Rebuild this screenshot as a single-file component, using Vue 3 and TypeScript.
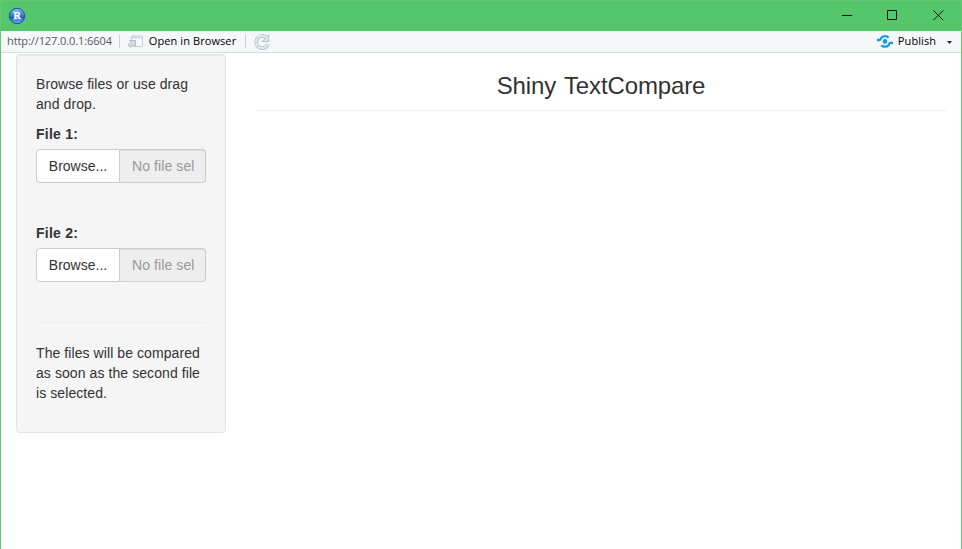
<script setup lang="ts">
interface FileField {
  id: string
  label: string
  status: string
}

const address = 'http://127.0.0.1:6604'
const fields: FileField[] = [
  { id: 'file1', label: 'File 1:', status: 'No file sel' },
  { id: 'file2', label: 'File 2:', status: 'No file sel' },
]
</script>

<template>
  <div class="window">
    <header class="titlebar">
      <svg class="logo" width="18" height="18" viewBox="0 0 18 18">
        <defs>
          <linearGradient id="ball" x1="0" y1="0" x2="0" y2="1">
            <stop offset="0" stop-color="#8fbdf0" />
            <stop offset="0.45" stop-color="#3f7fd4" />
            <stop offset="0.6" stop-color="#1f5fc4" />
            <stop offset="1" stop-color="#62b4f6" />
          </linearGradient>
        </defs>
        <circle cx="9" cy="9" r="7.7" fill="url(#ball)" stroke="#1c4fae" stroke-width="1" />
        <text x="9" y="12" text-anchor="middle" class="logo-letter">R</text>
      </svg>
      <div class="controls">
        <svg width="11" height="11" viewBox="0 0 11 11"><path d="M1 5.5H11" /></svg>
        <svg width="11" height="11" viewBox="0 0 11 11"><path d="M.5 .5H9.5V9.5H.5Z" /></svg>
        <svg width="11" height="11" viewBox="0 0 11 11"><path d="M.4 .4L10.2 10.2M10.2 .4L.4 10.2" /></svg>
      </div>
    </header>

    <nav class="toolbar">
      <span class="address">{{ address }}</span>
      <i class="divider first"></i>
      <button class="tool open">
        <svg width="17" height="13" viewBox="0 0 17 13">
          <rect x="4.5" y="1" width="11" height="10.5" rx="1" fill="#f8fbfe" stroke="#bdcbdb" />
          <path d="M5 1.5H15V3.5H5Z" fill="#c6dcf2" />
          <path d="M2.6 5.5H8.5V11.3L6.7 9.5L3.6 12.3L1 9.8L4.2 7.2Z" fill="#d5dde5" stroke="#a9b5c1" stroke-width=".9" />
        </svg>
        <span>Open in Browser</span>
      </button>
      <i class="divider second"></i>
      <svg class="refresh" width="16" height="16" viewBox="0 0 16 16">
        <path d="M12.3 3.4A6.1 6.1 0 1 0 14 10.2" fill="none" stroke="#b3c0ce" stroke-width="3.6" />
        <path d="M14.7 .8V7.5H8.2Z" fill="#dfe8f1" stroke="#b3c0ce" />
        <path d="M12.4 3.5A6.1 6.1 0 1 0 13.8 10.3" fill="none" stroke="#e4ebf2" stroke-width="2" />
      </svg>
      <button class="tool publish">
        <svg width="16" height="14" viewBox="0 0 16 14">
          <g fill="none" stroke="#159be3" stroke-width="2.3">
            <path d="M0 6H2.5C3.7 6 3.7 4.6 4.5 3.6C6.3 1.6 9.7 1.6 11.6 3.6" />
            <path d="M16 8.8H13.5C12.3 8.8 12.3 10.2 11.5 11.2C9.7 13.2 6.3 13.2 4.4 11.2" />
          </g>
          <circle cx="8" cy="7.4" r="2.3" fill="#159be3" />
        </svg>
        <span>Publish</span>
        <svg class="caret" width="5" height="3" viewBox="0 0 5 3"><path d="M0 0H5L2.5 3Z" fill="#222" /></svg>
      </button>
    </nav>

    <main class="page">
      <aside class="well">
        <p>Browse files or use drag and drop.</p>
        <div v-for="field in fields" :key="field.id" class="field">
          <label :for="field.id">{{ field.label }}</label>
          <div class="input-group">
            <button class="browse">Browse...</button>
            <div :id="field.id" class="filename">{{ field.status }}</div>
          </div>
        </div>
        <hr />
        <p>The files will be compared as soon as the second file is selected.</p>
      </aside>
      <section class="content">
        <h3>Shiny TextCompare</h3>
        <hr />
      </section>
    </main>
  </div>
</template>

<style>
body {
  margin: 0;
  overflow: hidden;
}
</style>

<style scoped>
* {
  box-sizing: border-box;
}
.window {
  width: 100%;
  height: 100vh;
  border: 1px solid #63c979;
  border-bottom: 0;
  background: #fff;
  color: #333;
  font: 14px/20px "Liberation Sans", Arial, sans-serif;
  overflow: hidden;
}
.titlebar {
  height: 30px;
  padding: 0 17px 0 7px;
  display: flex;
  align-items: center;
  justify-content: space-between;
  background: #55c76b;
}
.logo-letter {
  font: bold 10px "Liberation Serif", serif;
  fill: #fff;
  stroke: #fff;
  stroke-width: 0.4;
}
.controls {
  display: flex;
  gap: 35px;
  padding-bottom: 1px;
}
.controls svg {
  fill: none;
  stroke: #111;
  stroke-width: 1;
}
.toolbar {
  height: 22px;
  display: flex;
  align-items: center;
  padding-left: 6px;
  background: #f4f8f9;
  border-bottom: 1px solid #d6dadc;
  font: 11px/20px "Open Sans", "Noto Sans", sans-serif;
  color: #000;
}
.address {
  width: 105px;
  padding-bottom: 1px;
  letter-spacing: -0.09px;
  color: #55595c;
  white-space: nowrap;
}
.divider {
  width: 1px;
  height: 13px;
  margin-bottom: 1px;
  background: #cbd0d3;
}
.divider.first {
  margin-left: 7px;
}
.divider.second {
  margin-left: 8px;
}
.tool {
  display: flex;
  align-items: center;
  padding: 0 0 1px;
  border: 0;
  background: none;
  font: inherit;
  color: #000;
  white-space: nowrap;
}
.open {
  margin-left: 7px;
}
.open span {
  width: 89px;
  margin-left: 4px;
  letter-spacing: 0.09px;
}
.refresh {
  margin-left: 8px;
}
.publish {
  margin-left: auto;
  padding-right: 9px;
}
.publish span {
  width: 40px;
  margin-left: 4px;
  letter-spacing: 0.1px;
}
.caret {
  margin: 3px 0 0 10px;
}
.page {
  display: flex;
  align-items: flex-start;
  padding: 1px 15px 0;
  gap: 30px;
}
.well {
  width: 210px;
  height: 379px;
  padding: 19px;
  background: #f5f5f5;
  border: 1px solid #e3e3e3;
  border-radius: 4px;
  box-shadow: inset 0 1px 1px rgba(0, 0, 0, 0.05);
}
p {
  margin: 0 0 10px;
  letter-spacing: 0.08px;
}
.field {
  height: 99px;
}
label {
  display: block;
  margin-bottom: 5px;
  font-weight: bold;
  letter-spacing: 0.25px;
}
.input-group {
  display: flex;
  height: 34px;
}
.browse {
  flex: 0 0 84px;
  padding: 0;
  border: 1px solid #ccc;
  border-radius: 4px 0 0 4px;
  background: #fff;
  color: #333;
  font: inherit;
}
.filename {
  flex: 1;
  min-width: 0;
  padding: 6px 0 6px 12px;
  border: 1px solid #ccc;
  border-left: 0;
  border-radius: 0 4px 4px 0;
  background: #eee;
  box-shadow: inset 0 1px 1px rgba(0, 0, 0, 0.075);
  color: #999;
  white-space: nowrap;
  letter-spacing: 0.1px;
}
hr {
  margin: 0 0 20px;
  border: 0;
  border-top: 1px solid #eee;
}
.content {
  flex: 1;
}
h3 {
  margin: 19px 0 11px;
  font-size: 24px;
  line-height: 26px;
  font-weight: 400;
  text-align: center;
  letter-spacing: -0.13px;
  word-spacing: 1.8px;
}
</style>
